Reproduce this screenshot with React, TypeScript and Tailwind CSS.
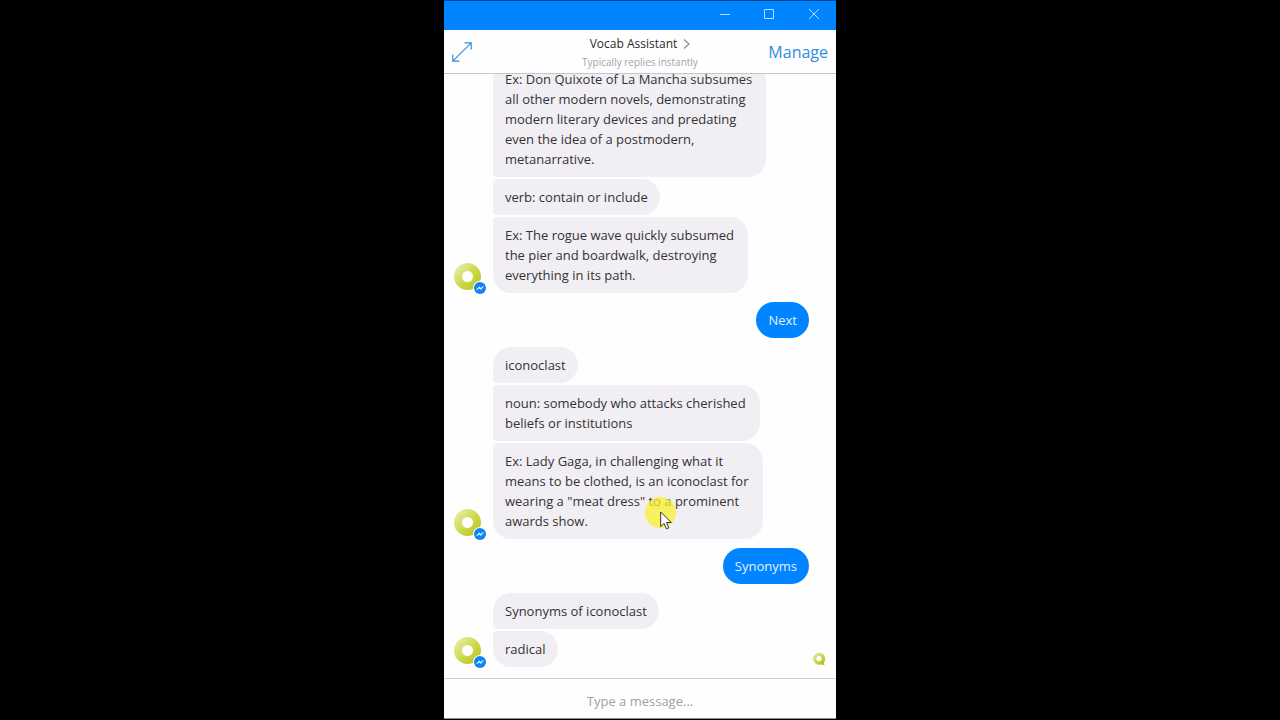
import React from "react";
import clsx from "clsx";

type Message = { from: "bot" | "me"; lines: string[][]; continued?: boolean; seen?: boolean };

const messages: Message[] = [
    {
        from: "bot",
        continued: true,
        lines: [
            [
                "Ex: Don Quixote of La Mancha subsumes",
                "all other modern novels, demonstrating",
                "modern literary devices and predating",
                "even the idea of a postmodern,",
                "metanarrative.",
            ],
            ["verb: contain or include"],
            ["Ex: The rogue wave quickly subsumed", "the pier and boardwalk, destroying", "everything in its path."],
        ],
    },
    { from: "me", lines: [["Next"]] },
    {
        from: "bot",
        lines: [
            ["iconoclast"],
            ["noun: somebody who attacks cherished", "beliefs or institutions"],
            [
                "Ex: Lady Gaga, in challenging what it",
                "means to be clothed, is an iconoclast for",
                'wearing a "meat dress" to a prominent',
                "awards show.",
            ],
        ],
    },
    { from: "me", lines: [["Synonyms"]] },
    { from: "bot", seen: true, lines: [["Synonyms of iconoclast"], ["radical"]] },
];

const Avatar = () => (
    <div className="relative mb-[3px] flex h-[27px] w-[27px] shrink-0 items-center justify-center rounded-full bg-linear-to-br from-[#edf0b8] via-[#cfda4c] to-[#b5c010]">
        <div className="h-[11px] w-[11px] rounded-full bg-white" />
        <svg viewBox="0 0 14 14" className="absolute -right-[6px] -bottom-[5px] h-[14px] w-[14px]">
            <circle cx="7" cy="7" r="7" fill="#fff" />
            <circle cx="7" cy="7" r="6" fill="#0f84f5" />
            <path d="M3.6 8.8 6.2 5.8 7.8 7.2 10.4 5.4 7.9 8.5 6.3 7.2Z" fill="#fff" stroke="#fff" strokeWidth="0.5" strokeLinejoin="round" />
        </svg>
    </div>
);

const Seen = () => (
    <svg viewBox="0 0 14 14" className="mb-px ml-auto h-[14px] w-[14px] shrink-0" role="img" aria-label="Seen">
        <defs>
            <linearGradient id="seen" x1="0" y1="0" x2="1" y2="1">
                <stop offset="0" stopColor="#e6eba0" />
                <stop offset="0.55" stopColor="#cbd54a" />
                <stop offset="1" stopColor="#aab41c" />
            </linearGradient>
        </defs>
        <path d="M7 .8A6 6 0 1 0 8.6 12.6L12.6 13 11.8 10.6A6 6 0 0 0 7 .8Z" fill="url(#seen)" />
        <circle cx="7" cy="6.6" r="2.6" fill="#fff" />
    </svg>
);

const BotGroup = ({ lines, continued, seen }: Message) => (
    <div className="flex items-end px-2.5">
        <Avatar />
        <div className="ml-3 flex flex-col items-start gap-[2px]">
            {lines.map((text, i) => (
                <p
                    key={i}
                    className={clsx(
                        "rounded-r-[18px] bg-[#f1eff3] py-2 pl-3 whitespace-pre-line text-[#333335]",
                        text.length > 1 ? "pr-3.5" : "pr-3",
                        i === 0 && !continued ? "rounded-tl-[18px]" : "rounded-tl-[4px]",
                        i === lines.length - 1 ? "rounded-bl-[18px]" : "rounded-bl-[4px]"
                    )}
                >
                    {text.join("\n")}
                </p>
            ))}
        </div>
        {seen && <Seen />}
    </div>
);

const MyMessage = ({ lines }: Message) => (
    <p className="mr-[27px] self-end rounded-[18px] bg-[#0084ff] px-3 py-2 text-[#e2f2ff]">{lines[0].join("\n")}</p>
);

const TitleBar = () => (
    <div className="flex h-[30px] shrink-0 items-start justify-end border-t border-[#00458a] bg-[#0084ff] text-[#b5dbff]">
        <button aria-label="Minimize" className="flex h-[26px] w-[44px] items-center justify-center">
            <svg viewBox="0 0 10 10" className="h-[10px] w-[10px]" fill="none" stroke="currentColor">
                <path d="M0 5.5H10" />
            </svg>
        </button>
        <button aria-label="Maximize" className="flex h-[26px] w-[44px] items-center justify-center">
            <svg viewBox="0 0 10 10" className="h-[10px] w-[10px]" fill="none" stroke="currentColor">
                <path d="M.5.5H9.5V9.5H.5Z" />
            </svg>
        </button>
        <button aria-label="Close" className="flex h-[26px] w-[45px] items-center justify-center">
            <svg viewBox="0 0 10 10" className="h-[10px] w-[10px]" fill="none" stroke="currentColor">
                <path d="M0 0 10 10M10 0 0 10" />
            </svg>
        </button>
    </div>
);

const Header = () => (
    <header className="grid h-[44px] shrink-0 grid-cols-[1fr_auto_1fr] items-center border-b border-[#c6c6ca] px-2">
        <button aria-label="Expand" className="justify-self-start text-[#2c8fe0]">
            <svg viewBox="0 0 20 20" className="h-5 w-5" fill="none" stroke="currentColor" strokeWidth="1.2">
                <path d="M.8 19.2 19.2.8M12.5.8H19.2V7.5M.8 12.5V19.2H7.5" />
            </svg>
        </button>
        <div className="pt-0.5 text-center">
            <button className="flex w-full items-center justify-center gap-[6px] text-[12px] leading-[18px] text-[#2a2a2c]">
                Vocab Assistant
                <svg viewBox="0 0 7 10" className="h-[10px] w-[7px]" fill="none" stroke="#98989c" strokeWidth="1.5">
                    <path d="M1 .5 6 5 1 9.5" />
                </svg>
            </button>
            <p className="text-[10px] leading-[18px] text-[#a4a4a8]">Typically replies instantly</p>
        </div>
        <button className="justify-self-end text-base text-[#2c8fe0]">Manage</button>
    </header>
);

// yellow click highlight with the mouse arrow over it
const Pointer = () => (
    <div className="pointer-events-none absolute top-[497px] left-[201px] h-[31px] w-[31px] rounded-full bg-[#f9f02c]/75">
        <svg viewBox="0 0 12 19" className="absolute top-[14px] left-[15px] h-[19px] w-[12px]">
            <path d="M.7 1V15.6L4.1 12.4 6.4 17.8 8.8 16.8 6.5 11.5H11.2Z" fill="#fff" stroke="#333" strokeWidth="1" />
        </svg>
    </div>
);

export default function App() {
    return (
        <div className="flex h-screen justify-center bg-black pb-px font-['Open_Sans','Noto_Sans',sans-serif] text-[13px] leading-5">
            <main className="relative flex w-full max-w-[392px] flex-col overflow-hidden border-b border-[#8a8a8e] bg-[#fffeff]">
                <TitleBar />
                <Header />
                <section className="flex min-h-0 flex-1 flex-col justify-end gap-[9px] overflow-hidden pb-[11px]">
                    {messages.map((m, i) => (m.from === "bot" ? <BotGroup key={i} {...m} /> : <MyMessage key={i} {...m} />))}
                </section>
                <input
                    aria-label="Type a message"
                    placeholder="Type a message..."
                    className="h-[40px] shrink-0 border-t border-[#d0d0d4] px-3 pt-1 text-center outline-none placeholder:text-[#a0a0a4]"
                />
                <Pointer />
            </main>
        </div>
    );
}
